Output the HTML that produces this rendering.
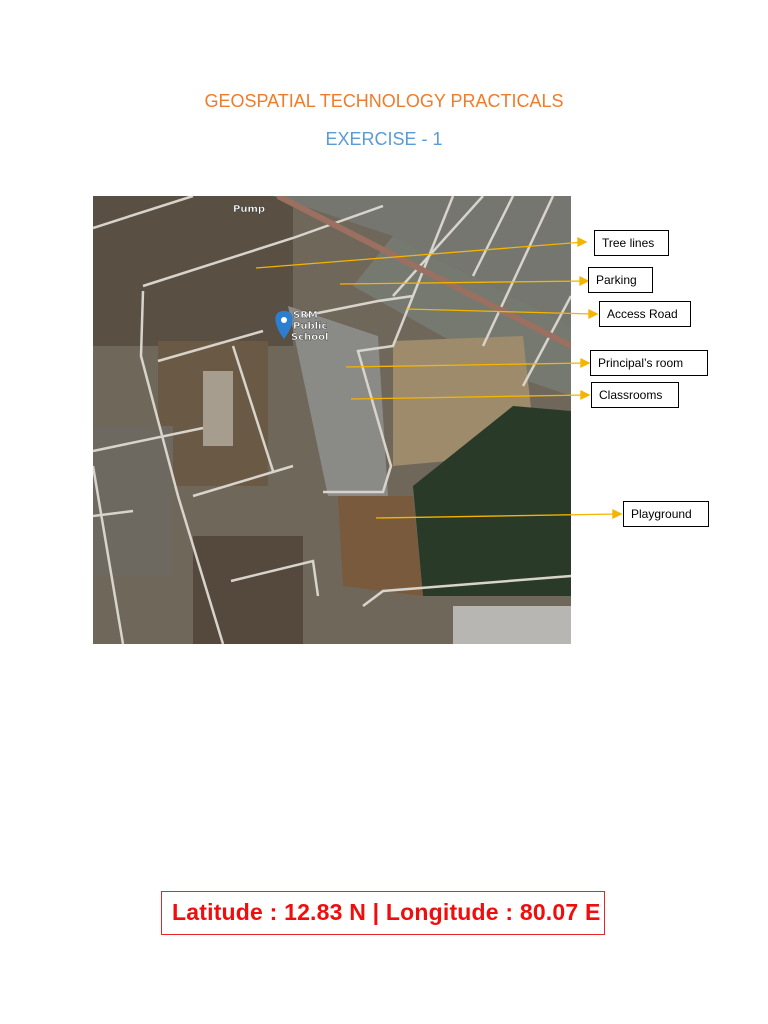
<!DOCTYPE html>
<html><head><meta charset="utf-8"><style>
body{margin:0;background:#fff;width:768px;height:1024px;position:relative;overflow:hidden;font-family:"Liberation Sans",sans-serif}
.t{position:absolute;left:0;width:768px;text-align:center;font-family:"Liberation Sans",sans-serif}
.lbl{position:absolute;border:1px solid #000;background:#fff;font-size:12px;color:#000;box-sizing:border-box;padding-left:7px;line-height:24px}
</style></head><body>
<div class="t" style="top:91px;font-size:18px;color:#f07b2a">GEOSPATIAL TECHNOLOGY PRACTICALS</div>
<div class="t" style="top:129px;font-size:18px;color:#5b9bd5">EXERCISE - 1</div>
<svg style="position:absolute;left:93px;top:196px" width="478" height="448" viewBox="0 0 478 448">
<rect width="478" height="448" fill="#6f675a"/>
<rect x="0" y="0" width="200" height="150" fill="#5a4f43"/>
<polygon points="180,0 478,0 478,130 300,40" fill="#74766f"/>
<polygon points="300,40 478,130 478,200 420,180 260,90" fill="#767970"/>
<rect x="65" y="145" width="110" height="145" fill="#6a5a45"/>
<polygon points="300,145 430,140 440,230 410,260 300,270" fill="#9d8b6b"/>
<polygon points="195,110 285,140 295,300 235,300" fill="#8a8a86"/>
<polygon points="420,210 478,215 478,400 330,400 320,290" fill="#2a3a28"/>
<polygon points="245,300 320,300 330,400 250,390" fill="#7a5a3c"/>
<rect x="100" y="340" width="110" height="108" fill="#54493c"/>
<rect x="360" y="410" width="118" height="38" fill="#b8b6b2"/>
<rect x="110" y="175" width="30" height="75" fill="#a69d8e"/>
<rect x="0" y="230" width="80" height="150" fill="#6d6860"/>
<g fill="none" stroke="#d8d4cc" stroke-width="2.5">
<path d="M0,32 L100,0 M50,90 L200,42 L290,10 M50,95 L48,160 L85,300 L130,448 M65,165 L170,135 M0,255 L110,232 M0,320 L40,315 M100,300 L200,270 M138,385 L220,365 L225,400 M230,296 L290,296 L298,270 L275,190 L265,155 L300,150 L320,100 L360,0 M210,120 L285,105 L320,100 M0,270 L30,448 M140,150 L180,275 M270,410 L290,395 L478,380 M300,100 L390,0 M380,80 L420,0 M390,150 L460,0 M430,190 L478,100"/>
</g>
<path d="M185,0 L478,150" stroke="#9b7060" stroke-width="6"/>
<g fill="#fff" font-size="10" font-weight="bold" font-family="DejaVu Sans,sans-serif" stroke="#333" stroke-width="0.4">
<text x="140" y="16">Pump</text><text x="200" y="122">SRM</text><text x="200" y="133">Public</text><text x="198" y="144">School</text></g>
<path d="M191,115 C179,115 180,128 191,143 C202,128 203,115 191,115Z" fill="#2c7fd0"/><circle cx="191" cy="124" r="3" fill="#fff"/>
</svg>
<svg style="position:absolute;left:0;top:0" width="768" height="1024">
<g stroke="#f5b400" stroke-width="1.3" fill="#f5b400">
<line x1="256" y1="268" x2="584" y2="242"/><polygon points="586,242 578,238 578,246"/>
<line x1="340" y1="284" x2="586" y2="281"/><polygon points="588,281 580,277 580,285"/>
<line x1="406" y1="309" x2="594" y2="314"/><polygon points="597,314 589,310 589,318"/>
<line x1="346" y1="367" x2="586" y2="363"/><polygon points="589,363 581,359 581,367"/>
<line x1="351" y1="399" x2="586" y2="395"/><polygon points="589,395 581,391 581,399"/>
<line x1="376" y1="518" x2="618" y2="514"/><polygon points="621,514 613,510 613,518"/>
</g></svg>
<div class="lbl" style="left:594px;top:230px;width:75px;height:26px">Tree lines</div>
<div class="lbl" style="left:588px;top:267px;width:65px;height:26px">Parking</div>
<div class="lbl" style="left:599px;top:301px;width:92px;height:26px">Access Road</div>
<div class="lbl" style="left:590px;top:350px;width:118px;height:26px">Principal’s room</div>
<div class="lbl" style="left:591px;top:382px;width:88px;height:26px">Classrooms</div>
<div class="lbl" style="left:623px;top:501px;width:86px;height:26px">Playground</div>
<div style="position:absolute;left:161px;top:891px;width:444px;height:44px;border:1.5px solid #e8262a;box-sizing:border-box;color:#f20d0d;font-weight:bold;font-size:23px;line-height:41px;padding-left:10px;letter-spacing:0.2px">Latitude : 12.83 N | Longitude : 80.07 E</div>
</body></html>
